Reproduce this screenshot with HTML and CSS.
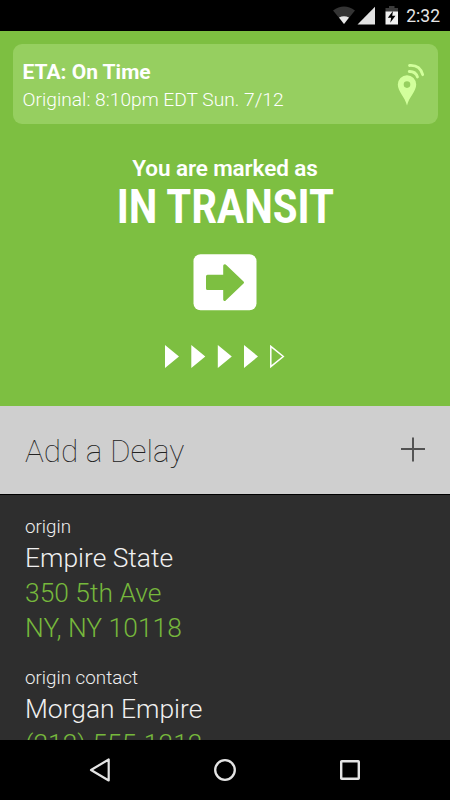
FILE: index.html
```html
<!DOCTYPE html>
<html lang="en">
<head>
    <meta charset="UTF-8">
    <meta name="viewport" content="width=device-width, initial-scale=1.0">
    <title>In Transit</title>
    <link rel="stylesheet" href="styles.css">
</head>
<body>

<div class="screen">
    <div class="status-bar">
        <svg class="status-icons" width="66" height="22" viewBox="0 0 66 22">
            <path d="M0 4.5Q11 -3.5 22 4.5L11 18Z" fill="#343434"/>
            <path d="M6 11.500Q11 9 16 11.500L11 18Z" fill="#e8e8e8"/>
            <path d="M24.500 18.500L42 .800V18.500Z" fill="#e2e2e2"/>
            <path d="M52.500 2H56V0H61.500V2H65V6H52.500Z" fill="#3c3c3c"/>
            <path d="M52.500 5.500H65V18.500H52.500Z" fill="#f0f0f0"/>
            <path d="M60 5L54.800 11.800H58.200L57.200 16.800L62.500 9.800H59.200Z" fill="#000"/>
        </svg>
        <span class="clock">2:32</span>
    </div>

    <div class="hero">
        <div class="eta-card">
            <div class="eta-text">
                <div class="eta-title">ETA: On Time</div>
                <div class="eta-original">Original: 8:10pm EDT Sun. 7/12</div>
            </div>
            <svg class="pin" width="28" height="43" viewBox="0 0 28 43">
                <path d="M10 42.500C8 34 .8 28.500 .8 21.500A9.200 9.200 0 0 1 19.200 21.500C19.200 28.500 12 34 10 42.500ZM10 18.300A3.300 3.300 0 1 0 10 24.900A3.300 3.300 0 0 0 10 18.300Z" fill="#d2ff9c" fill-rule="evenodd"/>
                <path d="M12.200 8.500Q18.500 8.200 20.500 14M12.500 2.500Q23 1.800 25.700 11.700" fill="none" stroke="#d2ff9c" stroke-width="2.800" stroke-linecap="round"/>
            </svg>
        </div>

        <div class="marked">You are marked as</div>
        <div class="state">IN TRANSIT</div>

        <svg class="arrow" width="64" height="57" viewBox="0 0 64 57">
            <rect x=".5" y=".2" width="63" height="56" rx="7" fill="#fff"/>
            <path d="M14.500 22.300H31.700V11.700L49.500 28.500L31.700 45.500V34.500H14.500Z" fill="#7dbf41" stroke="#7dbf41" stroke-width="3" stroke-linejoin="round"/>
        </svg>

        <svg class="progress" width="120" height="24" viewBox="0 0 120 24">
            <path d="M0 0L14 11.500L0 23ZM26.300 0L40.300 11.500L26.300 23ZM52.800 0L66.800 11.500L52.800 23ZM79 0L93 11.500L79 23Z" fill="#fff"/>
            <path d="M105.800 1.300L118.300 11.500L105.800 21.700Z" fill="none" stroke="#fff" stroke-width="1.500"/>
        </svg>
    </div>

    <div class="delay">
        <span>Add a Delay</span>
        <svg class="plus" width="24" height="26" viewBox="0 0 24 26">
            <path d="M0 13H24" stroke="#333" stroke-width="1.600"/>
            <path d="M12 1.500V25.500" stroke="#555" stroke-width="2"/>
        </svg>
    </div>

    <div class="details">
        <div class="entry">
            <div class="label">origin</div>
            <div class="name">Empire State</div>
            <div class="link">350 5th Ave</div>
            <div class="link">NY, NY 10118</div>
        </div>
        <div class="entry">
            <div class="label">origin contact</div>
            <div class="name">Morgan Empire</div>
            <div class="link">(212) 555-1212</div>
        </div>
    </div>

    <div class="nav-bar">
        <svg width="22" height="24" viewBox="0 0 22 24">
            <path d="M20.700 1.500V22.500L3 12Z" fill="none" stroke="#e4e4e4" stroke-width="2.200" stroke-linejoin="round"/>
        </svg>
        <svg width="22" height="22" viewBox="0 0 22 22">
            <circle cx="11" cy="11" r="9.800" fill="none" stroke="#e4e4e4" stroke-width="2.300"/>
        </svg>
        <svg width="20" height="20" viewBox="0 0 20 20">
            <rect x="1.200" y="1.200" width="17.600" height="17.600" rx=".5" fill="none" stroke="#e4e4e4" stroke-width="2.400"/>
        </svg>
    </div>
</div>

</body>
</html>
```
FILE: styles.css
```css
body {
    margin: 0;
    padding: 0;
    font-family: Roboto, "Open Sans", sans-serif;
    background-color: #000;
}

.screen {
    display: flex;
    flex-direction: column;
    width: 450px;
    height: 800px;
    overflow: hidden;
}

.screen svg {
    display: block;
    flex-shrink: 0;
}

.status-bar {
    display: flex;
    justify-content: flex-end;
    height: 31px;
    box-sizing: border-box;
    padding: 6px 10px 0 0;
    background-color: #000;
}

.clock {
    margin-left: 7px;
    color: #e6e6e6;
    font-size: 17.5px;
    font-weight: 450;
    line-height: 21px;
}

.hero {
    display: flex;
    flex-direction: column;
    align-items: center;
    height: 375px;
    box-sizing: border-box;
    padding-top: 13px;
    background-color: #7dbf41;
    color: #fff;
}

.eta-card {
    display: flex;
    justify-content: space-between;
    width: 425px;
    height: 80px;
    box-sizing: border-box;
    padding: 14px 13px 0 10px;
    border-radius: 9px;
    background-color: #96cf60;
    white-space: nowrap;
}

.eta-title {
    font-size: 21px;
    font-weight: 700;
    line-height: 28px;
}

.eta-original {
    font-size: 19.2px;
    font-weight: 360;
    line-height: 28px;
}

.pin {
    margin-top: 5px;
}

.marked {
    margin-top: 30px;
    font-size: 22.5px;
    font-weight: 600;
    line-height: 29px;
    letter-spacing: -0.1px;
}

.state {
    font-family: "Roboto Condensed", Roboto, sans-serif;
    font-size: 47.5px;
    font-weight: 600;
    line-height: 49px;
    letter-spacing: -0.6px;
    white-space: nowrap;
}

.arrow {
    margin-top: 22px;
}

.progress {
    margin-top: 34px;
}

.delay {
    display: flex;
    justify-content: space-between;
    align-items: center;
    height: 89px;
    box-sizing: border-box;
    padding: 3px 25px 0;
    border-bottom: 1px solid #000;
    background-color: #cfcfcf;
    color: #222;
    font-size: 31.5px;
    font-weight: 275;
}

.plus {
    margin-bottom: 5px;
}

.details {
    flex: 1;
    min-height: 0;
    padding: 18px 25px 0;
    overflow: hidden;
    background-color: #2e2e2e;
    color: #f0f0f0;
    font-size: 26.4px;
    font-weight: 300;
    line-height: 35px;
}

.entry {
    margin-bottom: 18px;
}

.label {
    font-size: 18.8px;
    line-height: 28px;
}

.name {
    line-height: 35px;
}

.link {
    color: #76b83c;
}

.nav-bar {
    display: flex;
    flex-shrink: 0;
    justify-content: space-between;
    align-items: center;
    height: 60px;
    box-sizing: border-box;
    padding: 0 90px 0 88px;
    background-color: #000;
}
```
